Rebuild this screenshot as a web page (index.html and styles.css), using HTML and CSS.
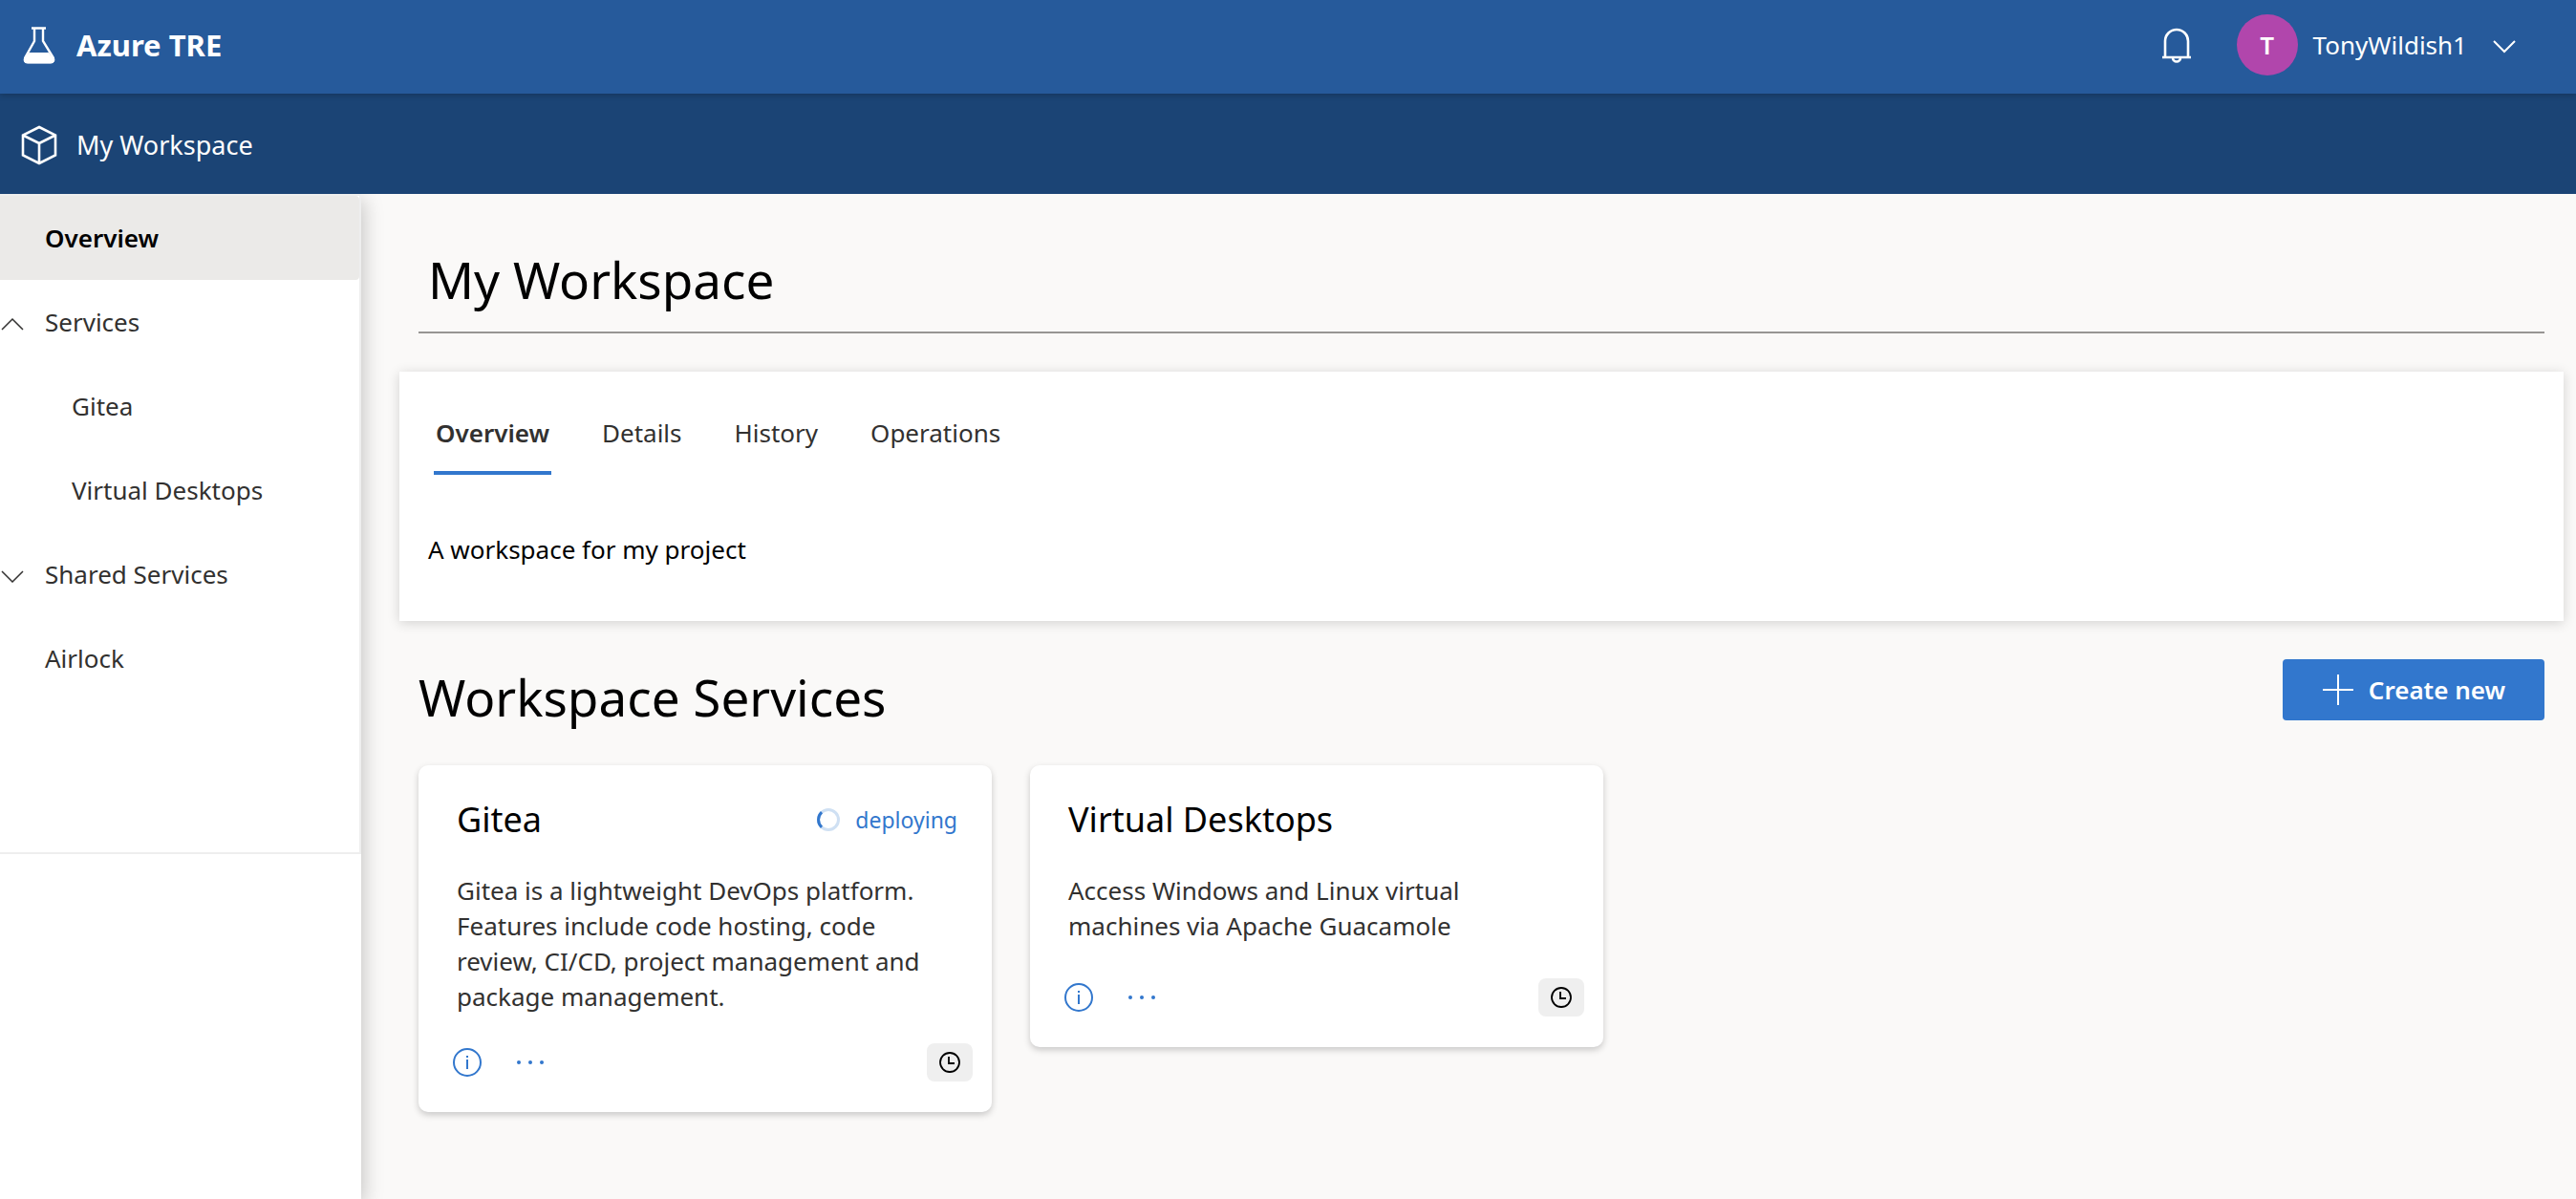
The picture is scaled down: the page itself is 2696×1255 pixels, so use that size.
FILE: index.html
```html
<!DOCTYPE html>
<html lang="en">
<head>
<meta charset="utf-8">
<meta name="viewport" content="width=device-width, initial-scale=1">
<title>Azure TRE</title>
<link rel="stylesheet" href="styles.css">
</head>
<body>
<header class="topbar">
  <a class="brand" href="#">
    <svg width="34" height="40" viewBox="0 0 34 40" aria-hidden="true">
      <path d="M9 2.500h15M12 3v13L2.200 33.500Q0.800 38 5 38h24Q33.200 38 31.800 33.500L21 16V3" fill="none" stroke="#fff" stroke-width="2.400"/>
      <path d="M6.500 28h20.500l5.500 7.500Q33 39.500 29 39.500H5Q0.500 39.500 1.200 35z" fill="#fff"/>
    </svg>
    <span class="brand-name">Azure TRE</span>
  </a>
  <div class="account">
    <button class="bell" type="button" aria-label="Notifications">
      <svg width="32" height="37" viewBox="0 0 32 37" fill="none" stroke="#fff" stroke-width="2.600" aria-hidden="true">
        <path d="M1 31h30M4 31V14a12 12 0 0 1 24 0v17M12 31.500a4 4 0 0 0 8 0"/>
      </svg>
    </button>
    <button class="user" type="button">
      <span class="avatar">T</span>
      <span>TonyWildish1</span>
      <svg class="user-chevron" width="26" height="16" viewBox="0 0 26 16" fill="none" stroke="#fff" stroke-width="2" aria-hidden="true"><path d="M2 2l11 11L24 2"/></svg>
    </button>
  </div>
</header>
<div class="workspace-bar">
  <svg width="38" height="42" viewBox="0 0 38 42" fill="none" stroke="#fff" stroke-width="2.600" aria-hidden="true">
    <path d="M19 2L36 10.500v21L19 40 2 31.500v-21zM2 10.500L19 19l17-8.500M19 19v21"/>
  </svg>
  <a class="workspace-name" href="#">My Workspace</a>
</div>
<div class="layout">
  <aside class="sidebar">
    <nav class="nav">
      <a class="nav-link selected" href="#">Overview</a>
      <a class="nav-link" href="#"><svg class="nav-chevron" width="26" height="14" viewBox="0 0 26 14" fill="none" stroke="#323130" stroke-width="1.500" aria-hidden="true"><path d="M2 13l11-11 11 11"/></svg>Services</a>
      <a class="nav-link nested" href="#">Gitea</a>
      <a class="nav-link nested" href="#">Virtual Desktops</a>
      <a class="nav-link" href="#"><svg class="nav-chevron" width="26" height="14" viewBox="0 0 26 14" fill="none" stroke="#323130" stroke-width="1.500" aria-hidden="true"><path d="M2 2l11 11L24 2"/></svg>Shared Services</a>
      <a class="nav-link" href="#">Airlock</a>
    </nav>
  </aside>
  <main class="content">
    <h1 class="page-title">My Workspace</h1>
    <section class="panel">
      <div class="tabs" role="tablist">
        <button class="tab active" type="button" role="tab" aria-selected="true">Overview</button>
        <button class="tab" type="button" role="tab" aria-selected="false">Details</button>
        <button class="tab" type="button" role="tab" aria-selected="false">History</button>
        <button class="tab" type="button" role="tab" aria-selected="false">Operations</button>
      </div>
      <p class="panel-text">A workspace for my project</p>
    </section>
    <section class="services">
      <div class="services-head">
        <h2 class="services-title">Workspace Services</h2>
        <button class="create" type="button">
          <svg width="32" height="32" viewBox="0 0 32 32" stroke="#fff" stroke-width="2" aria-hidden="true"><path d="M16 0v32M0 16h32"/></svg>
          Create new
        </button>
      </div>
      <div class="cards">
        <article class="card">
          <div class="card-head">
            <h3 class="card-title">Gitea</h3>
            <span class="status">
              <svg width="24" height="24" viewBox="0 0 24 24" fill="none" stroke-width="3" aria-hidden="true">
                <circle cx="12" cy="12" r="10.500" stroke="#cfe0f3"/>
                <path d="M5 19.800A10.500 10.500 0 0 1 5 4.200" stroke="#3277cd"/>
              </svg>
              deploying
            </span>
          </div>
          <p class="card-text">Gitea is a lightweight DevOps platform. Features include code hosting, code review, CI/CD, project management and package management.</p>
          <div class="card-foot">
            <button class="icon-button" type="button" aria-label="Info">
              <svg width="30" height="30" viewBox="0 0 30 30" fill="none" stroke="#3277cd" stroke-width="2" aria-hidden="true"><circle cx="15" cy="15" r="14"/><path d="M15 12v10M15 8v2"/></svg>
            </button>
            <button class="icon-button" type="button" aria-label="More">
              <svg width="30" height="30" viewBox="0 0 30 30" fill="#3277cd" aria-hidden="true"><circle cx="3" cy="15" r="2"/><circle cx="15" cy="15" r="2"/><circle cx="27" cy="15" r="2"/></svg>
            </button>
            <button class="clock" type="button" aria-label="Pending changes">
              <svg width="22" height="22" viewBox="0 0 22 22" fill="none" stroke="#000" stroke-width="1.800" aria-hidden="true"><circle cx="11" cy="11" r="10"/><path d="M10 5v7h6"/></svg>
            </button>
          </div>
        </article>
        <article class="card">
          <div class="card-head">
            <h3 class="card-title">Virtual Desktops</h3>
          </div>
          <p class="card-text">Access Windows and Linux virtual machines via Apache Guacamole</p>
          <div class="card-foot">
            <button class="icon-button" type="button" aria-label="Info">
              <svg width="30" height="30" viewBox="0 0 30 30" fill="none" stroke="#3277cd" stroke-width="2" aria-hidden="true"><circle cx="15" cy="15" r="14"/><path d="M15 12v10M15 8v2"/></svg>
            </button>
            <button class="icon-button" type="button" aria-label="More">
              <svg width="30" height="30" viewBox="0 0 30 30" fill="#3277cd" aria-hidden="true"><circle cx="3" cy="15" r="2"/><circle cx="15" cy="15" r="2"/><circle cx="27" cy="15" r="2"/></svg>
            </button>
            <button class="clock" type="button" aria-label="Pending changes">
              <svg width="22" height="22" viewBox="0 0 22 22" fill="none" stroke="#000" stroke-width="1.800" aria-hidden="true"><circle cx="11" cy="11" r="10"/><path d="M10 5v7h6"/></svg>
            </button>
          </div>
        </article>
      </div>
    </section>
  </main>
</div>
</body>
</html>
```
FILE: styles.css
```css
* { box-sizing: border-box; }

body {
  margin: 0;
  min-height: 100vh;
  display: flex;
  flex-direction: column;
  background: #faf9f8;
  color: #323130;
  font: 26px/37px "Noto Sans", "Open Sans", sans-serif;
}

h1, h2, h3, p { margin: 0; font-weight: 400; }
a { color: inherit; text-decoration: none; }
svg { display: block; flex: none; }

button {
  border: 0;
  padding: 0;
  background: none;
  color: inherit;
  font: inherit;
  cursor: pointer;
}

/* Header */
.topbar {
  position: relative;
  height: 98px;
  padding: 0 62px 4px 24px;
  display: flex;
  align-items: center;
  justify-content: space-between;
  background: #265a9b;
  color: #fff;
  box-shadow: 0 2px 6px rgba(0, 0, 0, 0.2);
}

.brand { display: flex; align-items: center; gap: 22px; }
.brand-name { font-size: 31px; font-weight: 700; }
.account { display: flex; align-items: center; gap: 47px; }
.user { display: flex; align-items: center; gap: 16px; }
.user-chevron { margin: 4px 0 0 10px; }

.avatar {
  width: 64px;
  height: 64px;
  border-radius: 50%;
  background: #b146ac;
  font-weight: 600;
  line-height: 64px;
  text-align: center;
}

.workspace-bar {
  height: 105px;
  padding: 2px 22px 0;
  display: flex;
  align-items: center;
  gap: 20px;
  background: #1b4475;
  color: #fff;
}

.workspace-name { font-size: 27px; }

/* Side navigation */
.layout { flex: 1; display: flex; }

.sidebar {
  width: 378px;
  flex: none;
  background: #fff;
  box-shadow: 2px 6px 20px rgba(0, 0, 0, 0.22);
  clip-path: inset(0 -30px 0 0);
}

.nav {
  min-height: 691px;
  border: 2px solid #eee;
  border-left: 0;
}

.nav-link {
  height: 88px;
  padding-left: 47px;
  display: flex;
  align-items: center;
  border-radius: 0 4px 4px 0;
}

.nav-link.nested { padding-left: 75px; }
.nav-link.selected { background: #ebeae8; color: #000; font-weight: 600; }
.nav-chevron { margin: 4px 21px 0 -47px; }

/* Main column */
.content { flex: 1; min-width: 0; padding: 60px 13px 60px 40px; }

.page-title {
  margin: 0 20px 40px;
  padding: 0 10px 24px;
  border-bottom: 2px solid #979593;
  color: #000;
  font-size: 53px;
  line-height: 60px;
}

.panel {
  padding: 20px 30px 56px;
  background: #fff;
  box-shadow: 0 2px 12px rgba(0, 0, 0, 0.16);
}

.tabs { padding-left: 6px; display: flex; gap: 51px; }

.tab {
  height: 88px;
  padding: 4px 2px 0;
  border-bottom: 4px solid transparent;
}

.tab.active { border-bottom-color: #3277cd; font-weight: 600; }
.panel-text { margin-top: 60px; color: #000; }

.services { padding: 40px 20px 0; }

.services-head {
  margin-bottom: 41px;
  display: flex;
  align-items: flex-start;
  justify-content: space-between;
}

.services-title {
  padding-top: 10px;
  color: #000;
  font-size: 53px;
  line-height: 60px;
}

.create {
  height: 64px;
  padding: 0 41px 0 42px;
  display: flex;
  align-items: center;
  gap: 16px;
  border-radius: 4px;
  background: #3277cd;
  color: #fff;
  font-weight: 600;
}

.cards { display: flex; flex-wrap: wrap; align-items: flex-start; gap: 40px; }

.card {
  width: 600px;
  padding: 37px 20px 32px 36px;
  border-radius: 10px;
  background: #fff;
  box-shadow: 0 3px 7px rgba(0, 0, 0, 0.2);
}

.card-head {
  padding: 0 16px 0 4px;
  display: flex;
  align-items: center;
  justify-content: space-between;
}

.card-title { color: #000; font-size: 36px; line-height: 40px; }

.status {
  display: flex;
  align-items: center;
  gap: 16px;
  color: #3277cd;
  font-size: 23px;
}

.card-text { min-height: 80px; margin: 36px 20px 30px 4px; }
.card-foot { display: flex; align-items: center; gap: 36px; }

.clock {
  width: 48px;
  height: 40px;
  margin-left: auto;
  display: grid;
  place-items: center;
  border-radius: 8px;
  background: #efefef;
}
```
